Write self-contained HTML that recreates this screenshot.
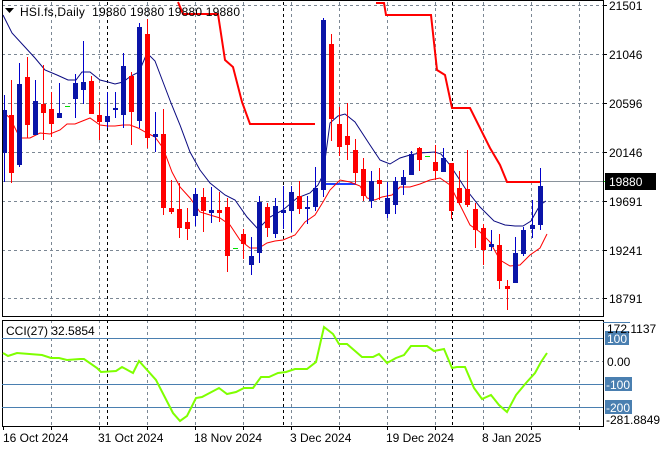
<!DOCTYPE html>
<html><head><meta charset="utf-8"><style>
html,body{margin:0;padding:0;background:#fff;}
svg{display:block;font-family:"Liberation Sans",sans-serif;}
</style></head><body>
<svg width="660" height="450" viewBox="0 0 660 450" xmlns="http://www.w3.org/2000/svg">
<rect width="660" height="450" fill="#fff"/>
<g stroke="#7b8794" stroke-width="1" stroke-dasharray="3,3" fill="none">
<path d="M2 5.5H603M2 54.5H603M2 103.5H603M2 152.5H603M2 201.5H603M2 250.5H603M2 298.5H603"/>
<path d="M51.5 2V317M99.5 2V317M147.5 2V317M195.5 2V317M243.5 2V317M291.5 2V317M339.5 2V317M387.5 2V317M435.5 2V317M483.5 2V317M531.5 2V317M579.5 2V317"/>
<path d="M51.5 320V426M99.5 320V426M147.5 320V426M195.5 320V426M243.5 320V426M291.5 320V426M339.5 320V426M387.5 320V426M435.5 320V426M483.5 320V426M531.5 320V426M579.5 320V426"/>
<path d="M2 361.5H603"/>
</g>
<g stroke="#000" stroke-width="1" stroke-dasharray="3,3" fill="none">
<path d="M107.5 2V317M283.5 2V317M452.5 2V317M107.5 320V426M283.5 320V426M452.5 320V426"/>
</g>
<path d="M2 181.5H603" stroke="#8a939c" stroke-width="1"/>
<g fill="none" stroke="#f00" stroke-width="2">
<polyline points="178,2 183,14 218,14 225,60 233,67 242,102 250,124 315,124"/>
<polyline points="376,3 384,3 386,15 431,15 437,70 445,75 452,108 470,108 490,148 500,165 507,182 540,182"/>
</g>
<path d="M323 184H356" stroke="#1e40ff" stroke-width="2"/>
<polyline fill="none" stroke="#0a0a80" stroke-width="1" points="3,15 12,33 35,58 45,70 57,75 68,80 76,80 82,72 90,72 100,80 108,82 115,84 123,82 131,76 139,72 147,53 155,61 163,82 171,103 180,125 190,152 200,170 210,183 225,195 235,200 247,217 258,229 270,217 283,210 297,198 310,193 318,185 323,175 330,123 338,116 345,114 355,122 370,145 380,160 390,164 400,158 410,155 420,153 435,152 441,154 450,165 465,188 480,207 494,221 505,225 515,226 523,226 531,221 540,205 546,201"/>
<polyline fill="none" stroke="#f00" stroke-width="1" points="3,112 10,118 20,138 30,138 40,133 50,134 60,130 67,124 75,124 90,118 100,125 108,126 115,126 123,125 130,125 138,128 147,133 155,137 163,148 172,172 180,187 190,198 200,212 210,215 220,218 230,225 240,240 250,248 259,248 267,243 275,241 283,240 295,235 305,222 315,215 323,202 330,190 340,180 350,182 360,186 367,198 375,200 382,197 392,195 400,187 410,187 420,184 430,180 440,178 450,185 460,205 470,225 480,232 490,242 500,260 510,266 520,265 530,255 540,248 547,234"/>
<g>
<g stroke="#0000cc" fill="#0a14a8">
<path d="M4.5 95V182M19.5 63V167M35.5 80V135M59.5 83V118M75.5 74V118M83.5 41V104M107.5 92V128M115.5 92V118M123.5 53V128M139.5 23V128M155.5 112V152M195.5 188V226M211.5 187V223M251.5 237V275M259.5 196V263M275.5 198V238M283.5 186V229M291.5 186V232M307.5 196V224M315.5 167V211M323.5 18V197M371.5 171V208M387.5 182V218M395.5 177V214M403.5 170V195M411.5 151V175M443.5 148V172M491.5 230V251M515.5 237V283M523.5 227V256M532.5 200V238M540.5 168V230"/>
</g>
<g fill="#0a14a8" stroke="none">
<rect x="2" y="110" width="5" height="43"/><rect x="17" y="84" width="5" height="81"/><rect x="33" y="101" width="5" height="34"/><rect x="57" y="113" width="5" height="5"/><rect x="73" y="83" width="5" height="16"/><rect x="81" y="82" width="5" height="8"/><rect x="105" y="116" width="5" height="6"/><rect x="113" y="108" width="5" height="2"/><rect x="121" y="66" width="5" height="49"/><rect x="137" y="27" width="5" height="94"/><rect x="153" y="134" width="5" height="3"/><rect x="193" y="194" width="5" height="22"/><rect x="209" y="210" width="5" height="3"/><rect x="249" y="256" width="5" height="9"/><rect x="257" y="202" width="5" height="51"/><rect x="273" y="206" width="5" height="28"/><rect x="281" y="210" width="5" height="3"/><rect x="289" y="192" width="5" height="19"/><rect x="305" y="207" width="5" height="2"/><rect x="313" y="188" width="5" height="19"/><rect x="321" y="20" width="5" height="170"/><rect x="369" y="181" width="5" height="20"/><rect x="385" y="198" width="5" height="16"/><rect x="393" y="181" width="5" height="24"/><rect x="401" y="177" width="5" height="8"/><rect x="409" y="154" width="5" height="21"/><rect x="441" y="158" width="5" height="14"/><rect x="489" y="244" width="5" height="3"/><rect x="513" y="253" width="5" height="30"/><rect x="521" y="230" width="5" height="24"/><rect x="530" y="225" width="5" height="4"/><rect x="538" y="186" width="5" height="39"/>
</g>
<g stroke="#f00">
<path d="M11.5 80V183M27.5 57V138M43.5 65V140M51.5 92V137M91.5 76V114M99.5 102V140M131.5 72V145M147.5 19V148M163.5 109V215M171.5 180V214M179.5 183V238M187.5 208V240M203.5 188V232M219.5 192V222M227.5 198V272M243.5 229V259M267.5 203V237M299.5 181V214M331.5 34V141M339.5 107V156M347.5 103V160M355.5 139V183M363.5 158V201M379.5 168V200M419.5 147V171M435.5 145V180M451.5 163V219M459.5 171V205M467.5 150V207M475.5 203V248M483.5 224V265M499.5 234V289M507.5 280V310"/>
</g>
<g fill="#f00">
<rect x="9" y="115" width="5" height="58"/><rect x="25" y="77" width="5" height="48"/><rect x="41" y="104" width="5" height="9"/><rect x="49" y="109" width="5" height="15"/><rect x="89" y="81" width="5" height="33"/><rect x="97" y="115" width="5" height="7"/><rect x="129" y="76" width="5" height="36"/><rect x="145" y="34" width="5" height="104"/><rect x="161" y="134" width="5" height="74"/><rect x="169" y="208" width="5" height="4"/><rect x="177" y="209" width="5" height="19"/><rect x="185" y="222" width="5" height="7"/><rect x="201" y="197" width="5" height="14"/><rect x="217" y="210" width="5" height="3"/><rect x="225" y="207" width="5" height="49"/><rect x="241" y="234" width="5" height="10"/><rect x="265" y="207" width="5" height="21"/><rect x="297" y="196" width="5" height="13"/><rect x="329" y="44" width="5" height="75"/><rect x="337" y="124" width="5" height="23"/><rect x="345" y="136" width="5" height="9"/><rect x="353" y="150" width="5" height="23"/><rect x="361" y="169" width="5" height="27"/><rect x="377" y="180" width="5" height="4"/><rect x="417" y="148" width="5" height="12"/><rect x="433" y="162" width="5" height="9"/><rect x="449" y="163" width="5" height="48"/><rect x="457" y="188" width="5" height="15"/><rect x="465" y="189" width="5" height="16"/><rect x="473" y="209" width="5" height="21"/><rect x="481" y="228" width="5" height="22"/><rect x="497" y="245" width="5" height="36"/><rect x="505" y="286" width="5" height="3"/>
</g>
<g stroke="#00e000"><path d="M65 106.5H70M233 248.5H238M425 156.5H430M603 181.5H608"/></g>
</g>
<rect x="2.5" y="0.5" width="601" height="316" fill="none" stroke="#000"/>
<rect x="2.5" y="320.5" width="601" height="106" fill="none" stroke="#000"/>
<g stroke="#4a7fb0" stroke-width="1"><path d="M2 338.5H603M2 384.5H603M2 407.5H603M603 322.5H630"/></g>
<polyline fill="none" stroke="#7fff00" stroke-width="2" points="3,353 8,356 17,353 42,355 51,358 59,358 67,360 80,359 84,359 97,368 101,372 116,371 122,367 133,373 139,361 156,380 173,413 180,421 187,416 196,398 202,397 219,388 227,394 236,392 244,388 253,388 261,377 269,377 278,373 286,372 295,369 307,369 316,362 324,327 333,334 339,344 347,344 362,357 373,357 379,354 387,363 396,358 404,355 411,346 427,346 434,351 444,349 452,368 457,367 465,367 474,388 482,399 491,395 499,405 507,412 516,395 526,383 535,373 541,362 547,353"/>
<g stroke="#000"><path d="M603 5.5H607M603 54.5H607M603 103.5H607M603 152.5H607M603 201.5H607M603 250.5H607M603 298.5H607"/>
<path d="M3.5 426V430M51.5 426V430M99.5 426V430M147.5 426V430M195.5 426V430M243.5 426V430M291.5 426V430M339.5 426V430M387.5 426V430M435.5 426V430M483.5 426V430M531.5 426V430M579.5 426V430"/></g>
<g font-size="12" fill="#000">
<text x="609" y="10">21501</text><text x="609" y="59">21046</text><text x="609" y="108">20596</text><text x="609" y="157">20146</text><text x="609" y="206">19691</text><text x="609" y="255">19241</text><text x="609" y="303">18791</text>
</g>
<rect x="605" y="173" width="51" height="17" fill="#000"/>
<text x="609" y="186" font-size="12" fill="#fff">19880</text>
<g font-size="12">
<rect x="605" y="331" width="24" height="14" fill="#4a7fb0"/>
<rect x="605" y="377" width="27" height="14" fill="#4a7fb0"/>
<rect x="605" y="400" width="27" height="14" fill="#4a7fb0"/>
<text x="607" y="333" fill="#000">172.1137</text>
<text x="607" y="343" fill="#fff">100</text>
<text x="607" y="366" fill="#000">0.00</text>
<text x="606" y="389" fill="#fff">-100</text>
<text x="606" y="412" fill="#fff">-200</text>
<text x="606" y="424" fill="#000">-281.8849</text>
</g>
<path d="M5 8H14L9.5 13Z" fill="#000"/>
<text x="20" y="16" font-size="12" fill="#000" xml:space="preserve" textLength="220" lengthAdjust="spacing">HSI.fs,Daily  19880 19880 19880 19880</text>
<text x="6" y="335" font-size="12" fill="#000">CCI(27) 32.5854</text>
<g font-size="12" fill="#000">
<text x="3" y="442">16 Oct 2024</text><text x="98" y="442">31 Oct 2024</text><text x="194" y="442">18 Nov 2024</text><text x="290" y="442">3 Dec 2024</text><text x="386" y="442">19 Dec 2024</text><text x="482" y="442">8 Jan 2025</text>
</g>
</svg>
</body></html>
